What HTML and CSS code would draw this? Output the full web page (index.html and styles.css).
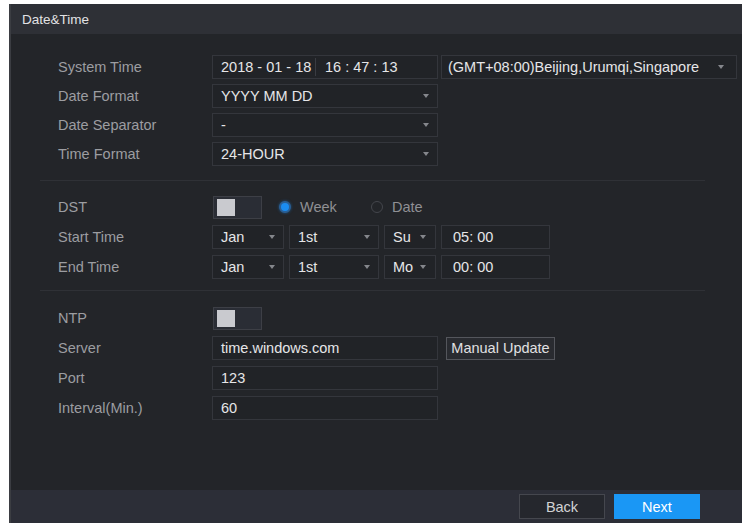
FILE: index.html
```html
<!DOCTYPE html>
<html lang="en">
<head>
  <meta charset="UTF-8">
  <title>Date&amp;Time</title>
  <link rel="stylesheet" href="styles.css">
</head>
<body>
  <div class="window">
    <div class="title">Date&amp;Time</div>

    <div class="content">
      <!-- clock and formats -->
      <div class="group tight">
        <div class="row">
          <span class="label">System Time</span>
          <div class="field w226 datetime">
            <span class="d">2018 - 01 - 18</span><span class="sep"></span><span class="t">16 : 47 : 13</span>
          </div>
          <div class="field select tz">(GMT+08:00)Beijing,Urumqi,Singapore</div>
        </div>
        <div class="row">
          <span class="label">Date Format</span>
          <div class="field select w226">YYYY MM DD</div>
        </div>
        <div class="row">
          <span class="label">Date Separator</span>
          <div class="field select w226">-</div>
        </div>
        <div class="row">
          <span class="label">Time Format</span>
          <div class="field select w226">24-HOUR</div>
        </div>
      </div>

      <div class="divider first"></div>

      <!-- daylight saving -->
      <div class="group">
        <div class="row">
          <span class="label">DST</span>
          <div class="toggle"><span class="knob"></span></div>
          <span class="radio on"></span><span class="opt">Week</span>
          <span class="radio"></span><span class="opt">Date</span>
        </div>
        <div class="row">
          <span class="label">Start Time</span>
          <div class="field select mon">Jan</div>
          <div class="field select nth">1st</div>
          <div class="field select day">Su</div>
          <div class="field clock">05: 00</div>
        </div>
        <div class="row">
          <span class="label">End Time</span>
          <div class="field select mon">Jan</div>
          <div class="field select nth">1st</div>
          <div class="field select day">Mo</div>
          <div class="field clock">00: 00</div>
        </div>
      </div>

      <div class="divider second"></div>

      <!-- network time -->
      <div class="group">
        <div class="row">
          <span class="label">NTP</span>
          <div class="toggle"><span class="knob"></span></div>
        </div>
        <div class="row">
          <span class="label">Server</span>
          <div class="field w226">time.windows.com</div>
          <button class="btn-small">Manual Update</button>
        </div>
        <div class="row">
          <span class="label">Port</span>
          <div class="field w226">123</div>
        </div>
        <div class="row">
          <span class="label">Interval(Min.)</span>
          <div class="field w226">60</div>
        </div>
      </div>
    </div>

    <div class="footer">
      <button class="btn back">Back</button>
      <button class="btn next">Next</button>
    </div>
  </div>
</body>
</html>
```

FILE: styles.css
```css
* { margin:0; padding:0; box-sizing:border-box; }
body { background:#fff; font-family:"Liberation Sans", Arial, sans-serif; padding:4px 0 0 9px; }

.window { width:733px; height:519px; background:#232529; border-left:2px solid #3b3d42; display:flex; flex-direction:column; }
.title { height:30px; background:#2e3036; color:#e2e2e4; font-size:13.5px; padding-left:11px; display:flex; align-items:center; }
.content { flex:1; padding:21px 0 0 47px; }

/* rows */
.group { display:flex; flex-direction:column; gap:6px; }
.group.tight { gap:5px; }
.row { display:flex; align-items:center; height:24px; font-size:14.5px; }
.label { width:154px; color:#9c9da1; }

.divider { height:1px; background:#2f3136; margin-left:-18px; width:665px; }
.divider.first { margin-top:14px; margin-bottom:14px; }
.divider.second { margin-top:11px; margin-bottom:15px; }

/* inputs and selects */
.field { height:24px; border:1px solid #34363c; background:#212327; color:#e6e6e8; padding:0 8px; display:flex; align-items:center; white-space:nowrap; }
.select::after { content:""; margin-left:auto; border-left:3px solid transparent; border-right:3px solid transparent; border-top:4px solid #85878c; }
.w226 { width:226px; }
.tz { width:296px; margin-left:3px; padding-left:6px; padding-right:12px; }
.datetime .d { width:94px; }
.datetime .sep { width:1px; height:18px; background:#3a3c42; }
.datetime .t { margin-left:9px; }
.mon { width:72px; }
.nth { width:90px; margin-left:5px; }
.day { width:52px; margin-left:5px; padding-right:9px; }
.clock { width:109px; margin-left:5px; padding-left:11px; }

/* switch */
.toggle { width:49px; height:23px; border:1px solid #3d3f46; background:#2a2d35; padding:2px 0 0 3px; margin-left:1px; }
.knob { display:block; width:18px; height:17px; background:#c9cacf; }

/* radio */
.radio { width:12px; height:12px; border-radius:50%; border:1px solid #44464c; margin-left:14px; }
.radio.on { margin-left:17px; background:#1b8cf0; border:2px solid #2a5f95; box-shadow:0 0 3px rgba(27,140,240,0.5); }
.opt { color:#8f9094; margin-left:9px; width:57px; }
.opt:last-child { width:auto; }

.btn-small { height:23px; width:109px; margin-left:8px; border:1px solid #54565c; background:#292b30; color:#e0e0e2; font:14.5px "Liberation Sans", Arial, sans-serif; }

/* footer */
.footer { height:33px; background:#2c2e37; display:flex; justify-content:flex-end; align-items:center; gap:9px; padding-right:42px; }
.btn { width:86px; height:25px; font:14.5px "Liberation Sans", Arial, sans-serif; border:1px solid #45474e; }
.back { background:#25272d; color:#d2d2d4; }
.next { background:#1a97f5; border-color:#1a97f5; color:#fff; }
```
